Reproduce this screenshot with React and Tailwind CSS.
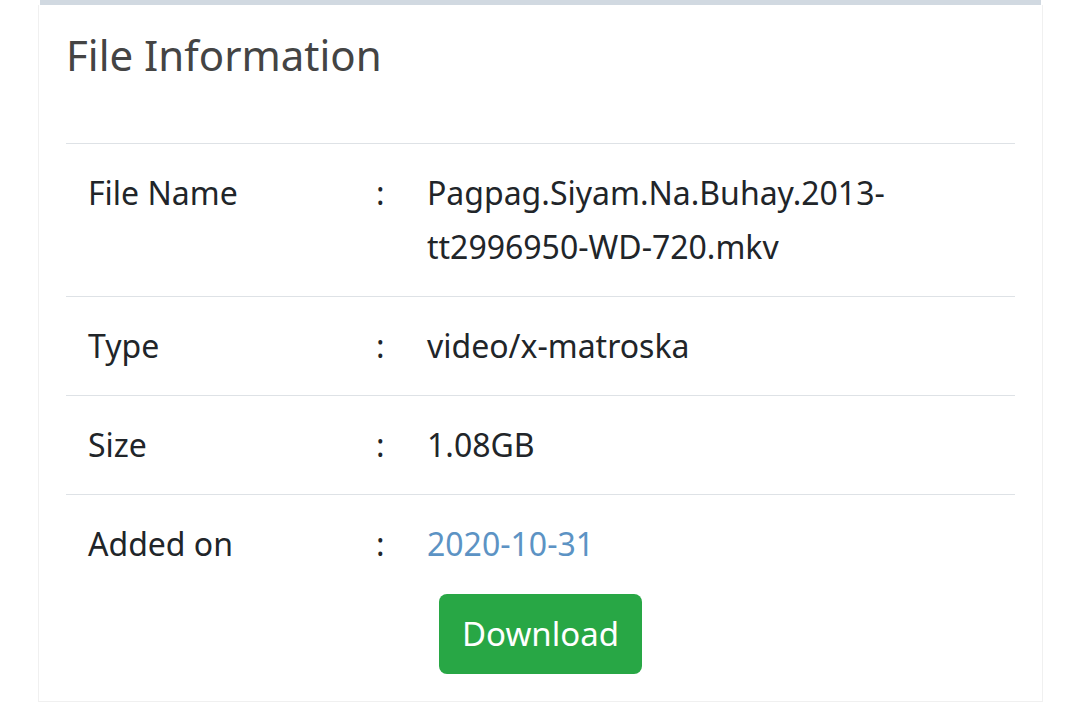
export default function App() {
  const rows = [
    { label: 'File Name', value: 'Pagpag.Siyam.Na.Buhay.2013-tt2996950-WD-720.mkv' },
    { label: 'Type', value: 'video/x-matroska' },
    { label: 'Size', value: '1.08GB' },
    { label: 'Added on', value: '2020-10-31', link: true },
  ];

  return (
    <div className="w-[1080px] h-[702px] overflow-hidden bg-white pl-[38px] pr-[37px] font-['Noto_Sans',sans-serif] text-[#212529]">
      <div className="h-[5px] mx-[2px] bg-[#d1d9e1]" />
      <div className="border border-t-0 border-[#f0f0f0] px-[27px] pb-[27px]">
        <h2 className="pt-[25px] pb-[63px] text-[42px] leading-[50px] text-[#444]">File Information</h2>

        <table className="w-full border-collapse text-[32px] leading-[54px]">
          <tbody>
            {rows.map((r, i) => (
              <tr key={r.label} className={i < rows.length - 1 ? 'border-t border-b border-[#dee2e6]' : 'border-t border-[#dee2e6]'}>
                <td className="w-[292px] px-[22px] py-[22px] align-top">{r.label}</td>
                <td className="w-[47px] pl-[18px] py-[22px] align-top">:</td>
                <td className="px-[22px] py-[22px] align-top">
                  {r.link ? <a href="#" className="text-[#5c93c4]">{r.value}</a> : r.value}
                </td>
              </tr>
            ))}
          </tbody>
        </table>

        <div className="flex justify-center pt-[1px]">
          <button className="w-[203px] h-[80px] rounded-[8px] bg-[#28a745] text-white text-[33px]">Download</button>
        </div>
      </div>
    </div>
  );
}
